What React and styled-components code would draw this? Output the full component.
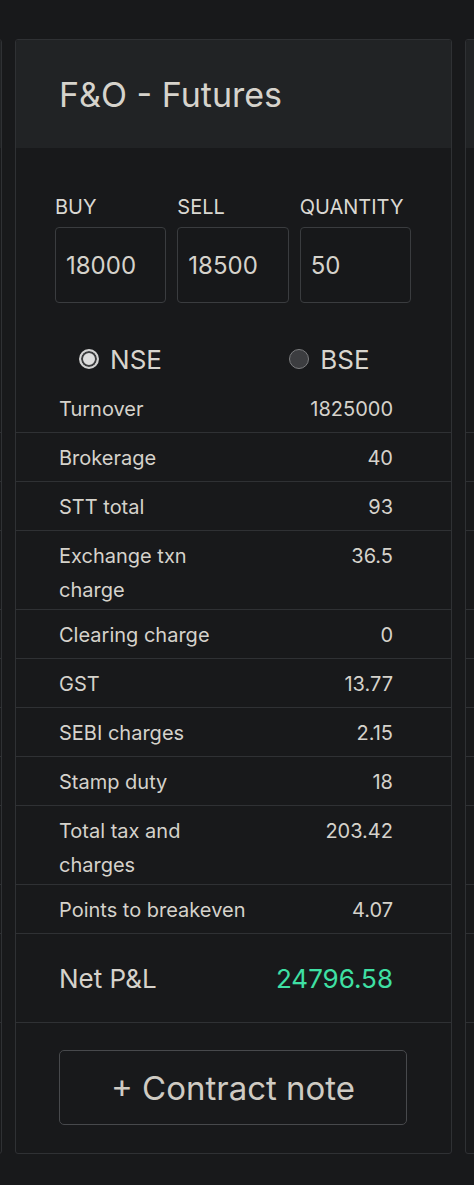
import React from 'react'
import styled, { createGlobalStyle } from 'styled-components'

const GlobalStyle = createGlobalStyle`
  html, body {
    margin: 0;
    padding: 0;
    background: #18191b;
    overflow-x: hidden;
  }
  body {
    font-family: Inter, "Noto Sans", sans-serif;
    color: #d5d2cb;
  }
`

// [label, value, wraps to two lines]
const futures = {
  title: 'F&O - Futures',
  buy: '18000',
  sell: '18500',
  qty: '50',
  rows: [
    ['Turnover', '1825000'],
    ['Brokerage', '40'],
    ['STT total', '93'],
    ['Exchange txn charge', '36.5', true],
    ['Clearing charge', '0'],
    ['GST', '13.77'],
    ['SEBI charges', '2.15'],
    ['Stamp duty', '18'],
    ['Total tax and charges', '203.42', true],
    ['Points to breakeven', '4.07'],
  ],
  net: '24796.58',
}

const cards = [
  { data: futures, ghost: true },
  { data: futures, ghost: false },
  { data: futures, ghost: true },
]

const blank = '\u00a0'

const Page = styled.div`
  padding: 39px 0 33px;
`

const Track = styled.div`
  display: flex;
  gap: 13px;
  margin-left: -435px;
`

const Card = styled.section`
  flex: 0 0 437px;
  box-sizing: border-box;
  border: 1px solid #2f3134;
  border-radius: 3px;
  background: #18191b;
  overflow: hidden;
`

const Header = styled.header`
  background: #212325;
  padding: 34px 43px 33px;
`

const Title = styled.h2`
  margin: 0;
  font-size: 34px;
  line-height: 41px;
  font-weight: 400;
  color: #d6d3cc;
`

const Fields = styled.div`
  display: grid;
  grid-template-columns: repeat(3, 1fr);
  gap: 11px;
  padding: 47px 40px 0 39px;
`

const Field = styled.label`
  display: flex;
  flex-direction: column;
  gap: 8px;
  min-width: 0;
`

const FieldName = styled.span`
  font-size: 20px;
  line-height: 24px;
  color: #dad8d2;
`

const NumberBox = styled.input`
  box-sizing: border-box;
  width: 100%;
  height: 76px;
  padding: 0 10px;
  border: 1px solid #3a3c3f;
  border-radius: 4px;
  background: #17181a;
  color: #d5d2cb;
  font-family: inherit;
  font-size: 24px;
  outline: none;
`

const Exchanges = styled.div`
  display: grid;
  grid-template-columns: 1fr 1fr;
  justify-items: center;
  padding: 40px 17px 9px 0;
`

const Exchange = styled.label`
  display: flex;
  align-items: center;
  gap: 11px;
  height: 32px;
  font-size: 26px;
  color: #d8d5ce;
`

const Radio = styled.input.attrs({ type: 'radio' })`
  appearance: none;
  margin: 0;
  width: 20px;
  height: 20px;
  box-sizing: border-box;
  border-radius: 50%;
  border: 1px solid #7b7c7e;
  background: #3c3d40;

  &:checked {
    border: 2px solid #d2d2d2;
    background: #dedede;
    box-shadow: inset 0 0 0 2px #3b3c3e;
  }
`

const Row = styled.div`
  display: flex;
  justify-content: space-between;
  align-items: flex-start;
  padding: 8px 58px 6px 43px;
  border-bottom: 1px solid #2f3134;
  font-size: 20px;
  line-height: 34px;
`

const RowLabel = styled.span`
  width: 191px;
  margin-bottom: ${(p) => (p.$tall ? '-4px' : '0')};
  min-height: ${(p) => (p.$tall ? '68px' : '34px')};
`

const RowValue = styled.span`
  text-align: right;
`

const NetRow = styled(Row)`
  align-items: center;
  padding-top: 28px;
  padding-bottom: 26px;
  font-size: 26px;
  line-height: 34px;
`

const Profit = styled.span`
  color: #3fe0a4;
`

const Footer = styled.div`
  padding: 27px 44px 28px 43px;
`

const NoteButton = styled.button`
  width: 100%;
  height: 75px;
  border: 1px solid #47494c;
  border-radius: 5px;
  background: transparent;
  color: #cfcbc3;
  font-family: inherit;
  font-size: 33px;
  cursor: pointer;
`

const Calculator = ({ data, ghost, index }) => {
  const t = (s) => (ghost ? blank : s)
  return (
    <Card aria-hidden={ghost || undefined}>
      <Header>
        <Title>{t(data.title)}</Title>
      </Header>
      <Fields>
        <Field>
          <FieldName>{t('BUY')}</FieldName>
          <NumberBox defaultValue={ghost ? '' : data.buy} />
        </Field>
        <Field>
          <FieldName>{t('SELL')}</FieldName>
          <NumberBox defaultValue={ghost ? '' : data.sell} />
        </Field>
        <Field>
          <FieldName>{t('QUANTITY')}</FieldName>
          <NumberBox defaultValue={ghost ? '' : data.qty} />
        </Field>
      </Fields>
      <Exchanges>
        <Exchange>
          <Radio name={'exchange-' + index} defaultChecked />
          {t('NSE')}
        </Exchange>
        <Exchange>
          <Radio name={'exchange-' + index} />
          {t('BSE')}
        </Exchange>
      </Exchanges>
      {data.rows.map(([label, value, tall]) => (
        <Row key={label}>
          <RowLabel $tall={tall}>{t(label)}</RowLabel>
          <RowValue>{t(value)}</RowValue>
        </Row>
      ))}
      <NetRow>
        <span>{ghost ? blank : 'Net P&L'}</span>
        <Profit>{t(data.net)}</Profit>
      </NetRow>
      <Footer>
        <NoteButton>{t('+ Contract note')}</NoteButton>
      </Footer>
    </Card>
  )
}

export default function App() {
  return (
    <Page>
      <GlobalStyle />
      <Track>
        {cards.map((c, i) => (
          <Calculator key={i} data={c.data} ghost={c.ghost} index={i} />
        ))}
      </Track>
    </Page>
  )
}
